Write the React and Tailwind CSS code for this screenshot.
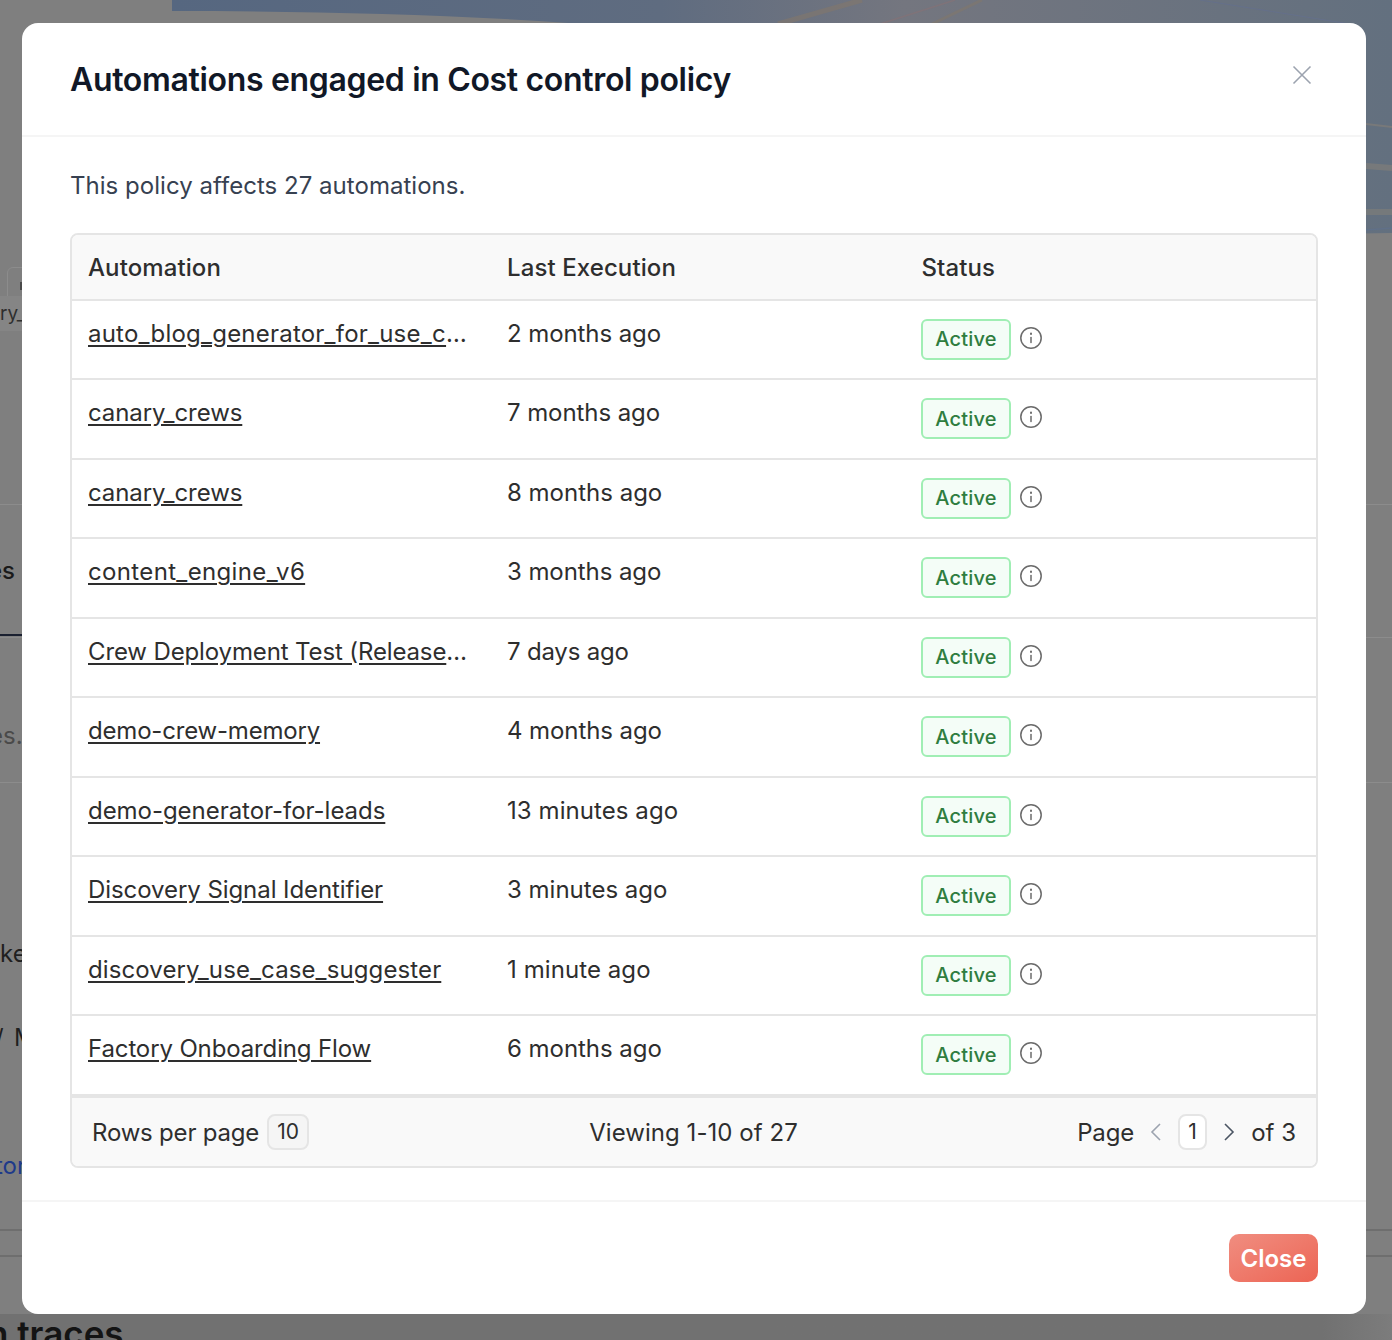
const rows = [
  { name: "auto_blog_generator_for_use_case_writer", nameTrack: "tracking-[0.22px]", when: "2 months ago", whenTrack: "tracking-[-0.08px]" },
  { name: "canary_crews", nameTrack: "tracking-[-0.08px]", when: "7 months ago", whenTrack: "tracking-[-0.08px]" },
  { name: "canary_crews", nameTrack: "tracking-[-0.08px]", when: "8 months ago", whenTrack: "tracking-[0px]" },
  { name: "content_engine_v6", nameTrack: "tracking-[0.35px]", when: "3 months ago", whenTrack: "tracking-[-0.08px]" },
  { name: "Crew Deployment Test (Release Candidate)", nameTrack: "tracking-[-0.13px]", when: "7 days ago", whenTrack: "tracking-[-0.2px]" },
  { name: "demo-crew-memory", nameTrack: "tracking-[-0.19px]", when: "4 months ago", whenTrack: "tracking-[-0.08px]" },
  { name: "demo-generator-for-leads", nameTrack: "tracking-[-0.04px]", when: "13 minutes ago", whenTrack: "tracking-[0.07px]" },
  { name: "Discovery Signal Identifier", nameTrack: "tracking-[-0.07px]", when: "3 minutes ago", whenTrack: "tracking-[0px]" },
  { name: "discovery_use_case_suggester", nameTrack: "tracking-[0.11px]", when: "1 minute ago", whenTrack: "tracking-[0.08px]" },
  { name: "Factory Onboarding Flow", nameTrack: "tracking-[-0.13px]", when: "6 months ago", whenTrack: "tracking-[-0.04px]" },
];

function InfoIcon() {
  return (
    <svg width="24" height="24" viewBox="0 0 24 24" fill="none" stroke="#6b6b6b" strokeWidth="1.5" strokeLinecap="round">
      <circle cx="12" cy="12" r="10.2" />
      <path d="M12 11.5v5" />
      <path d="M12 7.6v.3" strokeWidth="2" />
    </svg>
  );
}

function Backdrop() {
  return (
    <div className="absolute inset-0 overflow-hidden bg-[#7f7f7f]">
      <svg className="absolute left-0 top-0" width="1392" height="240" viewBox="0 0 1392 240">
        <defs>
          <linearGradient id="sky" x1="0" x2="1" y1="0" y2="0">
            <stop offset="0" stopColor="#566780" />
            <stop offset="0.4" stopColor="#5f6c80" />
            <stop offset="0.6" stopColor="#74767f" />
            <stop offset="1" stopColor="#63707f" />
          </linearGradient>
        </defs>
        <path d="M172 0H1392V233C1200 236 1000 236 900 230L820 30C700 28 620 28 568 23C440 14 300 11 172 11Z" fill="url(#sky)" />
        <path d="M862 0L778 24" stroke="#85786a" strokeWidth="5" opacity="0.55" />
        <path d="M955 0L880 24" stroke="#867276" strokeWidth="1.5" opacity="0.65" />
        <path d="M982 0L932 24" stroke="#83786b" strokeWidth="3" opacity="0.55" />
        <path d="M1200 0L1350 24" stroke="#65708a" strokeWidth="1" />
        <path d="M1366 124L1392 127" stroke="#817d78" strokeWidth="2" opacity="0.7" />
        <path d="M1366 166L1392 168" stroke="#807e7a" strokeWidth="6" opacity="0.7" />
        <path d="M1366 212H1392" stroke="#7d7d7a" strokeWidth="6" opacity="0.7" />
        <path d="M1366 230L1392 228" stroke="#607088" strokeWidth="1.5" />
      </svg>
      <div className="absolute left-[7px] top-[267px] h-[30px] w-[40px] rounded-t-md border border-[#8c8c8c]" />
      <div className="absolute left-[20px] top-[282px] h-[8px] w-[2px] bg-[#4a4a4a]" />
      <div className="absolute left-0 top-[296px] h-[35px] w-[22px] bg-[#858585] text-[19px] leading-[35px] text-[#2e2e2e]">ry_</div>
      <div className="absolute left-0 top-[504px] h-px w-full bg-[#8c8c8c]" />
      <div className="absolute left-0 top-[555px] w-[22px] overflow-hidden text-[24px] font-medium leading-[32px] text-[#1a1a1a]"><span className="ml-[-12px]">es</span></div>
      <div className="absolute left-0 top-[637px] h-px w-full bg-[#8c8c8c]" />
      <div className="absolute left-0 top-[634px] h-[2px] w-[22px] bg-[#1a2030]" />
      <div className="absolute left-0 top-[720px] w-[22px] overflow-hidden text-[24px] leading-[32px] text-[#4a4a4a]"><span className="ml-[-11px]">es.</span></div>
      <div className="absolute left-0 top-[782px] h-px w-full bg-[#8c8c8c]" />
      <div className="absolute left-0 top-[938px] w-[22px] overflow-hidden text-[24px] leading-[32px] text-[#1f1f1f]">ke</div>
      <div className="absolute left-[-5px] top-[1022px] w-[10px] overflow-hidden text-[24px] leading-[32px] text-[#1f1f1f]">/</div>
      <div className="absolute left-[14px] top-[1022px] w-[8px] overflow-hidden text-[24px] leading-[32px] text-[#1f1f1f]">M</div>
      <div className="absolute left-0 top-[1150px] w-[22px] overflow-hidden text-[24px] leading-[32px] text-[#1e3a8a]"><span className="ml-[-5px]">tor</span></div>
      <div className="absolute left-0 top-[1229px] h-[2px] w-full bg-[#6e6e6e]" />
      <div className="absolute left-0 top-[1255px] h-[2px] w-full bg-[#6e6e6e]" />
      <div className="absolute left-0 top-[1314px] h-[26px] w-full bg-gradient-to-r from-[#717171] from-[95%] to-[#7c7c7c]" />
      <div className="absolute left-[-13px] top-[1311px] whitespace-nowrap text-[35px] font-semibold leading-[44px] text-[#141414]">n traces</div>
    </div>
  );
}

export default function App() {
  return (
    <div className="relative h-[1340px] w-[1392px] overflow-hidden font-['Inter',sans-serif]">
      <Backdrop />
      <div className="relative pl-[22px] pt-[23px]">
        <div className="flex h-[1291px] w-[1344px] flex-col rounded-[16px] bg-white">
          <div className="flex h-[114px] shrink-0 items-start justify-between border-b-2 border-[#f5f5f5] pl-[48px] pr-[54px]">
            <h2 className="pt-[37px] text-[32px] font-semibold leading-[40px] tracking-[-0.33px] text-[#111827]">
              Automations engaged in Cost control policy
            </h2>
            <svg className="mt-[42px]" width="20" height="20" viewBox="0 0 20 20" fill="none" stroke="#9ca3af" strokeWidth="1.6">
              <path d="M1.5 1.5l17 17M18.5 1.5l-17 17" />
            </svg>
          </div>

          <div className="flex min-h-0 flex-1 flex-col px-[48px] pt-[33px]">
            <p className="text-[24px] leading-[32px] tracking-[0.03px] text-[#374151]">This policy affects 27 automations.</p>
            <div className="mt-[31px] overflow-hidden rounded-[8px] border-2 border-[#e5e5e5]">
              <div className="flex h-[65.5px] items-center border-b-2 border-[#e5e5e5] bg-[#f9f9f9] pt-[2px] text-[24px] font-medium leading-[32px] tracking-[0.1px] text-[#2e2e2e]">
                <div className="w-[419px] pl-[16px]">Automation</div>
                <div className="w-[414.5px] pl-[16px]">Last Execution</div>
                <div className="pl-[16px]">Status</div>
              </div>
              {rows.map((r, i) => (
                <div key={i} className="flex h-[79.5px] border-b-2 border-[#e5e5e5] text-[24px] leading-[32px] text-[#2e2e2e]">
                  <div className="w-[419px] pl-[16px] pr-[20px] pt-[17.25px]">
                    <a className={"block truncate underline underline-offset-[3px] " + r.nameTrack}>{r.name}</a>
                  </div>
                  <div className={"w-[414.5px] pl-[16px] pt-[17.25px] " + r.whenTrack}>{r.when}</div>
                  <div className="flex items-start gap-[8px] pl-[15.5px] pt-[18.25px]">
                    <span className="flex h-[41px] w-[90px] items-center justify-center rounded-[6px] border-2 border-[#a0eeb4] bg-[#f4fdf7] text-[20px] font-medium leading-[28px] tracking-[0.2px] text-[#2f7d3f]">
                      Active
                    </span>
                    <span className="mt-[7px] block"><InfoIcon /></span>
                  </div>
                </div>
              ))}
              <div className="flex h-[70px] items-center justify-between border-t-2 border-[#e5e5e5] bg-[#f9f9f9] pl-[20px] pr-[20px] text-[24px] leading-[32px] text-[#2e2e2e]">
                <div className="flex w-[400px] items-center gap-[8px]">
                  <span className="pt-[2px] tracking-[-0.2px]">Rows per page</span>
                  <span className="flex h-[36px] w-[42px] items-center justify-center rounded-[8px] border-2 border-[#e5e5e5] bg-[#f5f5f5] text-[21px]">10</span>
                </div>
                <div className="pt-[2px] pr-[1px] text-center tracking-[0.05px]">Viewing 1-10 of 27</div>
                <div className="flex w-[400px] items-center justify-end">
                  <span className="pt-[2px] tracking-[-0.13px]">Page</span>
                  <svg className="ml-[15px]" width="14" height="20" viewBox="0 0 14 20" fill="none" stroke="#9ca3af" strokeWidth="1.6"><path d="M11 2l-8 8 8 8" /></svg>
                  <span className="ml-[15px] flex h-[36px] w-[29px] items-center justify-center rounded-[8px] border-2 border-[#e5e5e5] bg-white text-[21px]">1</span>
                  <svg className="ml-[15px]" width="14" height="20" viewBox="0 0 14 20" fill="none" stroke="#4b5563" strokeWidth="1.6"><path d="M3 2l8 8-8 8" /></svg>
                  <span className="ml-[15px] pt-[2px]">of 3</span>
                </div>
              </div>
            </div>
          </div>

          <div className="flex h-[114px] shrink-0 items-start justify-end border-t-2 border-[#f5f5f5] pr-[48px] pt-[32px]">
            <button className="flex h-[48px] w-[89px] items-center justify-center rounded-[10px] bg-gradient-to-br from-[#f08d80] to-[#ec6454] pt-[1px] text-[24px] font-semibold leading-[32px] text-white">
              Close
            </button>
          </div>
        </div>
      </div>
    </div>
  );
}
